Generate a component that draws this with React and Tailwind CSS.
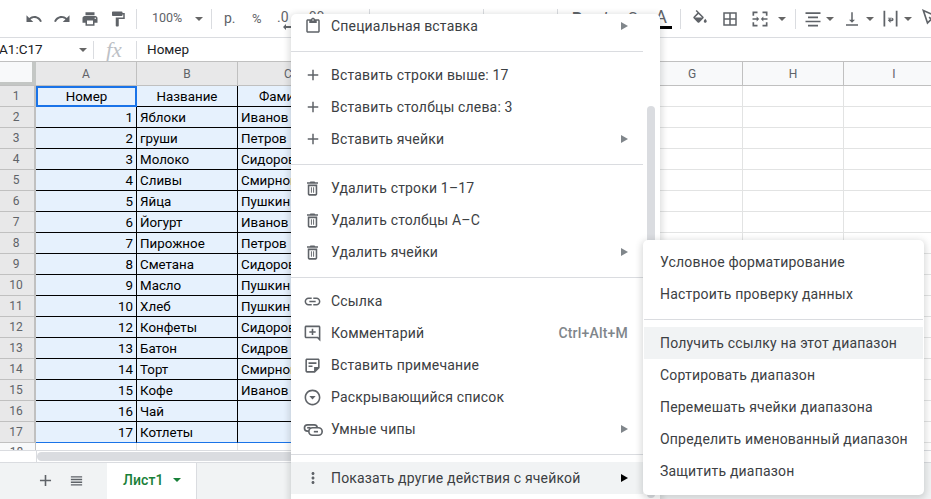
const ROWS = [
  ['Номер', 'Название', 'Фамилия'],
  ['1', 'Яблоки', 'Иванов'],
  ['2', 'груши', 'Петров'],
  ['3', 'Молоко', 'Сидоров'],
  ['4', 'Сливы', 'Смирнов'],
  ['5', 'Яйца', 'Пушкин'],
  ['6', 'Йогурт', 'Иванов'],
  ['7', 'Пирожное', 'Петров'],
  ['8', 'Сметана', 'Сидоров'],
  ['9', 'Масло', 'Пушкин'],
  ['10', 'Хлеб', 'Пушкин'],
  ['12', 'Конфеты', 'Сидоров'],
  ['13', 'Батон', 'Сидров'],
  ['14', 'Торт', 'Смирнов'],
  ['15', 'Кофе', 'Иванов'],
  ['16', 'Чай', ''],
  ['17', 'Котлеты', ''],
]
const COLS = ['A', 'B', 'C', 'D', 'E', 'F', 'G', 'H', 'I']
const PLAIN = ['D', 'E', 'F', 'G', 'H', 'I']

function Icon({ d, size = 18, view = 24, className = 'text-[#5f6368]' }) {
  return (
    <svg width={size} height={size} viewBox={`0 0 ${view} ${view}`} fill="currentColor" className={`shrink-0 ${className}`}>
      <path d={d} />
    </svg>
  )
}

function Caret({ className = '' }) {
  return <span className={`shrink-0 w-0 h-0 border-x-[4px] border-x-transparent border-t-[4px] border-t-[#666] ${className}`} />
}

function Sep({ className = '' }) {
  return <span className={`shrink-0 w-px h-5 bg-[#dadce0] ${className}`} />
}

const P = {
  undo: 'M12.5 8c-2.65 0-5.05.99-6.9 2.6L2 7v9h9l-3.62-3.62c1.39-1.16 3.16-1.88 5.12-1.88 3.54 0 6.55 2.31 7.6 5.5l2.37-.78C21.08 11.03 17.15 8 12.5 8z',
  redo: 'M18.4 10.6C16.55 8.99 14.15 8 11.5 8c-4.65 0-8.58 3.03-9.96 7.22L3.9 16c1.05-3.19 4.05-5.5 7.6-5.5 1.95 0 3.73.72 5.12 1.88L13 16h9V7l-3.6 3.6z',
  print: 'M19 8H5c-1.66 0-3 1.34-3 3v6h4v4h12v-4h4v-6c0-1.66-1.34-3-3-3zm-3 11H8v-5h8v5zm3-7c-.55 0-1-.45-1-1s.45-1 1-1 1 .45 1 1-.45 1-1 1zm-1-9H6v4h12V3z',
  paint: 'M18 4V3c0-.55-.45-1-1-1H5c-.55 0-1 .45-1 1v4c0 .55.45 1 1 1h12c.55 0 1-.45 1-1V6h1v4H9v11c0 .55.45 1 1 1h2c.55 0 1-.45 1-1v-9h8V4h-3z',
  fill: 'M16.56 8.94L7.62 0 6.21 1.41l2.38 2.38-5.15 5.15c-.59.59-.59 1.54 0 2.12l5.5 5.5c.29.29.68.44 1.06.44s.77-.15 1.06-.44l5.5-5.5c.59-.58.59-1.53 0-2.12zM5.21 10L10 5.21 14.79 10H5.21zM19 11.5s-2 2.17-2 3.5c0 1.1.9 2 2 2s2-.9 2-2c0-1.33-2-3.5-2-3.5z',
  borders: 'M3 3v18h18V3H3zm8 16H5v-6h6v6zm0-8H5V5h6v6zm8 8h-6v-6h6v6zm0-8h-6V5h6v6z',
  merge: 'M3 3h6v2H5v3H3V3zm12 0h6v5h-2V5h-4V3zM3 16h2v3h4v2H3v-5zm16 0h2v5h-6v-2h4v-3zM3 11h5V9l3 3-3 3v-2H3v-2zm18 0h-5V9l-3 3 3 3v-2h5v-2z',
  align: 'M3 4h18v2H3V4zm3 5h12v2H6V9zm-3 5h18v2H3v-2zm3 5h12v2H6v-2z',
  valign: 'M11 3h2v10h3l-4 4-4-4h3V3zM4 19h16v2H4v-2z',
  wrap: 'M4 3h2v18H4V3zm14 0h2v18h-2V3zM9 11h4.5a2 2 0 0 1 0 4H12v2l-3-3 3-3v2h1.5a.5.5 0 0 0 0-1H9v-1z',
  paste: 'M19 3h-4.18C14.4 1.84 13.3 1 12 1s-2.4.84-2.82 2H5c-1.1 0-2 .9-2 2v14c0 1.1.9 2 2 2h14c1.1 0 2-.9 2-2V5c0-1.1-.9-2-2-2zm-7 0c.55 0 1 .45 1 1s-.45 1-1 1-1-.45-1-1 .45-1 1-1zm7 16H5V5h2v3h10V5h2v14z',
  plus: 'M19 13h-6v6h-2v-6H5v-2h6V5h2v6h6v2z',
  trash: 'M6 19c0 1.1.9 2 2 2h8c1.1 0 2-.9 2-2V7H6v12zM8 9h8v10H8V9zm7.5-5l-1-1h-5l-1 1H5v2h14V4zM10 10.5h1.2v7H10v-7zm2.8 0H14v7h-1.2v-7z',
  link: 'M3.9 12c0-1.71 1.39-3.1 3.1-3.1h4V7H7c-2.76 0-5 2.24-5 5s2.24 5 5 5h4v-1.9H7c-1.71 0-3.1-1.39-3.1-3.1zM8 13h8v-2H8v2zm9-6h-4v1.9h4c1.71 0 3.1 1.39 3.1 3.1s-1.39 3.1-3.1 3.1h-4V17h4c2.76 0 5-2.24 5-5s-2.24-5-5-5z',
  comment: 'M22 4c0-1.1-.9-2-2-2H4c-1.1 0-2 .9-2 2v12c0 1.1.9 2 2 2h14l4 4V4zm-2 0v13.2L18.8 16H4V4h16zM11 6h2v3h3v2h-3v3h-2v-3H8V9h3V6z',
  note: 'M19 3H5c-1.1 0-2 .9-2 2v14c0 1.1.9 2 2 2h10l6-6V5c0-1.1-.9-2-2-2zM5 19V5h14v9h-5v5H5zm2-11h10v2H7V8zm0 4h5v2H7v-2z',
  dropdown: 'M12 2C6.48 2 2 6.48 2 12s4.48 10 10 10 10-4.48 10-10S17.52 2 12 2zm0 18c-4.42 0-8-3.58-8-8s3.58-8 8-8 8 3.58 8 8-3.58 8-8 8zm-4-10h8l-4 4.5L8 10z',
  more: 'M12 8c1.100 0 2-.9 2-2s-.9-2-2-2-2 .9-2 2 .9 2 2 2zm0 2c-1.100 0-2 .9-2 2s.9 2 2 2 2-.9 2-2-.9-2-2-2zm0 6c-1.100 0-2 .9-2 2s.9 2 2 2 2-.9 2-2-.9-2-2-2z',
  list: 'M3 5h18v2.200H3V5zm0 4.300h18v2.200H3V9.300zm0 4.300h18v2.200H3v-2.200zM3 18h18v2H3v-2z',
}

function ChipsIcon() {
  return (
    <svg width="20" height="20" viewBox="0 0 24 24" fill="none" stroke="currentColor" strokeWidth="2" className="shrink-0 text-[#5f6368]">
      <path d="M7 14.500H5.500a3.700 3.700 0 0 1 0-7.500h8a3.700 3.700 0 0 1 3.600 3" />
      <path d="M5 10.500h4" />
      <rect x="7" y="10.500" width="16" height="9" rx="4.500" />
      <path d="M13 15.200h5" />
    </svg>
  )
}

function RotateIcon() {
  return (
    <svg width="20" height="20" viewBox="0 0 24 24" fill="none" stroke="currentColor" strokeWidth="2" className="shrink-0 ml-[2px] text-[#5f6368]">
      <path d="M4 3l5 15 9-9zM11 11l10 10" />
    </svg>
  )
}

function MenuItem({ icon, iconNode, size = 18, label, hint, arrow, active, dark }) {
  return (
    <div className={`h-8 w-[352px] flex items-center shrink-0 ${active ? 'bg-[#f1f3f4]' : ''}`}>
      <span className="w-10 flex justify-center shrink-0 pl-[3px]">
        {iconNode}
        {icon && <Icon d={icon} size={size} />}
      </span>
      <span className="text-[#3c4043] text-[14px] tracking-[0.17px] grow whitespace-nowrap">{label}</span>
      {hint && <span className="text-[#80868b] text-[14px] tracking-[0.2px] font-medium mr-[15px]">{hint}</span>}
      {arrow && (
        <span className={`mr-[15px] w-0 h-0 border-y-[4px] border-y-transparent border-l-[7px] ${dark ? 'border-l-black' : 'border-l-[#80868b]'}`} />
      )}
    </div>
  )
}

function Divider() {
  return <div className="h-px w-[352px] bg-[#dadce0] mt-[9px] mb-[7px] shrink-0" />
}

function SubItem({ label, active }) {
  return (
    <div className={`h-8 pl-4 flex items-center text-[14px] tracking-[0.19px] text-[#3c4043] whitespace-nowrap ${active ? 'bg-[#f1f3f4]' : ''}`}>
      {label}
    </div>
  )
}

export default function App() {
  return (
    <div className="relative w-[931px] h-[499px] overflow-hidden bg-white font-['Roboto',sans-serif] flex flex-col">
      {/* Toolbar */}
      <div className="h-[38px] shrink-0 flex items-center border-b border-[#dadce0] text-[#5f6368] overflow-hidden">
        <span className="w-[25px] shrink-0" />
        <Icon d={P.undo} />
        <Icon d={P.redo} className="text-[#5f6368] ml-[10px]" />
        <Icon d={P.print} className="text-[#5f6368] ml-[10px]" />
        <Icon d={P.paint} className="text-[#5f6368] ml-[10px]" />
        <Sep className="ml-[9px]" />
        <span className="ml-[15px] text-[12.5px] w-[30px] shrink-0">100%</span>
        <Caret className="ml-[13px]" />
        <Sep className="ml-[8px]" />
        <span className="ml-[12px] text-[14px] w-[12px] shrink-0">р.</span>
        <span className="ml-[16px] text-[13px] w-[12px] shrink-0">%</span>
        <span className="ml-[13px] w-[14px] shrink-0 flex flex-col pt-[3px]">
          <span className="text-[14px] leading-[14px]">.0</span>
          <svg width="9" height="6" viewBox="0 0 9 6" fill="currentColor" className="ml-[6px]"><path d="M0 3l3-3v2h6v2H3v2z" /></svg>
        </span>
        <span className="ml-[14px] w-[18px] shrink-0 flex flex-col pt-[3px]">
          <span className="text-[14px] leading-[14px]">.00</span>
          <svg width="9" height="6" viewBox="0 0 9 6" fill="currentColor" className="ml-[6px]"><path d="M9 3L6 0v2H0v2h6v2z" /></svg>
        </span>
        <span className="ml-[8px] text-[13px] w-[24px] shrink-0">123</span>
        <Sep className="ml-[14px]" />
        <span className="ml-[17px] w-[96px] shrink-0 text-[13px] whitespace-nowrap">По умолчанию</span>
        <Sep />
        <span className="ml-[16px] text-[13px] w-[14px] shrink-0">10</span>
        <Sep className="ml-[43px]" />
        <span className="ml-[14px] text-[16px] font-bold w-[14px] shrink-0">B</span>
        <span className="ml-[17px] text-[16px] italic w-[14px] shrink-0">I</span>
        <span className="ml-[11px] text-[16px] w-[14px] shrink-0">S</span>
        <span className="ml-[12px] w-[18px] flex flex-col items-center shrink-0">
          <span className="text-[18px] leading-[16px] pr-[4px]">A</span>
          <span className="w-[18px] h-[3px] bg-black mt-[1px]" />
        </span>
        <Sep className="ml-[8px]" />
        <Icon d={P.fill} className="text-[#5f6368] ml-[10px]" />
        <Icon d={P.borders} className="text-[#5f6368] ml-[12px]" />
        <Icon d={P.merge} size={20} className="text-[#5f6368] ml-[11px]" />
        <Caret className="ml-[8px]" />
        <Sep className="ml-[9px]" />
        <Icon d={P.align} size={20} className="text-[#5f6368] ml-[7px]" />
        <Caret className="ml-[3px]" />
        <Icon d={P.valign} className="text-[#5f6368] ml-[9px]" />
        <Caret className="ml-[5px]" />
        <Icon d={P.wrap} size={21} className="text-[#5f6368] ml-[6px]" />
        <Caret className="ml-[3px]" />
        <span className="ml-[6px] shrink-0 -mt-[1px]"><RotateIcon /></span>
      </div>

      {/* Formula bar */}
      <div className="h-[24px] shrink-0 flex items-center border-b border-[#c0c0c0] text-[13.5px] text-[#202124]">
        <span className="-ml-[1px] w-[80px] shrink-0">A1:C17</span>
        <Caret />
        <span className="ml-[6px] w-px h-[18px] bg-[#dadce0] shrink-0" />
        <span className="ml-[12px] w-[30px] font-['Liberation_Serif',serif] italic text-[22px] leading-[22px] text-[#bdc1c6] shrink-0">fx</span>
        <span className="w-px h-[18px] bg-[#dadce0] shrink-0" />
        <span className="ml-[10px]">Номер</span>
      </div>

      {/* Column headers */}
      <div className="h-[24px] shrink-0 flex border-b border-[#c0c0c0] text-[12px] text-[#5f6368]">
        <div className="w-[36px] shrink-0 bg-[#f8f9fa] border-r-[4px] border-b-[3px] border-[#c4c7c5]" />
        {COLS.map(c => (
          <div
            key={c}
            className={`w-[101px] shrink-0 flex items-center justify-center border-r border-[#c0c0c0] ${PLAIN.includes(c) ? 'bg-[#f8f9fa]' : 'bg-[#e8e8e9]'}`}
          >
            {c}
          </div>
        ))}
      </div>

      {/* Cells */}
      <div className="flex flex-col shrink-0">
        {ROWS.map((row, i) => (
          <div key={i} className="h-[21px] flex text-[13.33px] text-black">
            <div className="w-[36px] shrink-0 flex items-center justify-center bg-[#e8e8e9] border-r-2 border-b border-[#c0c0c0] text-[12px] text-[#5f6368] pr-[2px]">
              {i + 1}
            </div>
            <div className={`w-[101px] shrink-0 flex items-center pt-px bg-[#e6f1fd] ${i === 0 ? 'justify-center border-2 border-[#1a73e8]' : 'justify-end pr-[3px] border-r border-b border-black'} ${i === 16 ? 'border-b-[#1a73e8]' : ''}`}>
              {row[0]}
            </div>
            <div className={`w-[101px] shrink-0 flex items-center pt-px bg-[#e6f1fd] border-r border-b border-black ${i === 0 ? 'justify-center' : 'pl-[3px]'} ${i === 16 ? 'border-b-[#1a73e8]' : ''}`}>
              {row[1]}
            </div>
            <div className={`w-[101px] shrink-0 flex items-center pt-px bg-[#e6f1fd] border-r border-b border-black whitespace-nowrap overflow-hidden ${i === 0 ? 'justify-center' : 'pl-[3px]'} ${i === 16 ? 'border-b-[#1a73e8]' : ''}`}>
              {row[2]}
            </div>
            {PLAIN.map(c => (
              <div key={c} className="w-[101px] shrink-0 border-r border-b border-[#e2e3e3]" />
            ))}
          </div>
        ))}
        {/* row 18 is cut off by the scrollbar */}
        <div className="h-[7px] flex overflow-hidden text-[12px] text-[#5f6368]">
          <div className="w-[36px] shrink-0 bg-[#f8f9fa] border-r border-[#c0c0c0] flex justify-center pr-[2px]">18</div>
          {COLS.map(c => (
            <div key={c} className="w-[101px] shrink-0 border-r border-[#e2e3e3]" />
          ))}
        </div>
      </div>

      {/* Scrollbar */}
      <div className="h-[12px] shrink-0 flex items-center border-t border-[#dadce0] bg-white">
        <div className="w-[37px] shrink-0 h-full border-r border-[#dadce0]" />
        <div className="w-[700px] h-[9px] rounded-full bg-[#dadce0]" />
      </div>

      {/* Sheet tabs */}
      <div className="grow flex items-stretch bg-[#f1f3f4] border-t border-[#dadce0]">
        <Icon d={P.plus} size={19} className="text-[#5f6368] ml-[36px] mt-[8px]" />
        <Icon d={P.list} size={15} className="text-[#5f6368] ml-[14px] mt-[10px]" />
        <div className="ml-[23px] w-[90px] bg-white flex items-center pb-[2px] border-r border-[#dadce0] text-[#188038] text-[14px] font-medium">
          <span className="ml-[16px] tracking-[0.1px]">Лист1</span>
          <Caret className="ml-[9px] border-t-[#188038]" />
        </div>
      </div>

      {/* Context menu */}
      <div className="absolute left-[291px] top-[14px] w-[369px] h-[490px] bg-white rounded-[5px] shadow-[0_2px_6px_2px_rgba(60,64,67,0.18)] overflow-hidden flex flex-col">
        <div className="-mt-[4px] flex flex-col">
          <MenuItem icon={P.paste} label="Специальная вставка" arrow />
          <Divider />
          <MenuItem icon={P.plus} label="Вставить строки выше: 17" />
          <MenuItem icon={P.plus} label="Вставить столбцы слева: 3" />
          <MenuItem icon={P.plus} label="Вставить ячейки" arrow />
          <Divider />
          <MenuItem icon={P.trash} size={19} label="Удалить строки 1–17" />
          <MenuItem icon={P.trash} size={19} label="Удалить столбцы A–C" />
          <MenuItem icon={P.trash} size={19} label="Удалить ячейки" arrow />
          <Divider />
          <MenuItem icon={P.link} size={19} label="Ссылка" />
          <MenuItem icon={P.comment} size={19} label="Комментарий" hint="Ctrl+Alt+M" />
          <MenuItem icon={P.note} size={19} label="Вставить примечание" />
          <MenuItem icon={P.dropdown} size={19} label="Раскрывающийся список" />
          <MenuItem iconNode={<ChipsIcon />} label="Умные чипы" arrow />
          <Divider />
          <MenuItem icon={P.more} label="Показать другие действия с ячейкой" arrow active dark />
        </div>
        <div className="absolute left-[356px] top-[92px] w-2 h-[392px] rounded-full bg-[#dadce0]" />
      </div>

      {/* Submenu */}
      <div className="absolute left-[643px] top-[240px] w-[281px] bg-white rounded-[5px] shadow-[0_2px_6px_2px_rgba(60,64,67,0.18)] pt-[6px] pb-2 px-px">
        <SubItem label="Условное форматирование" />
        <SubItem label="Настроить проверку данных" />
        <div className="h-px bg-[#dadce0] mt-[9px] mb-[7px]" />
        <SubItem label="Получить ссылку на этот диапазон" active />
        <SubItem label="Сортировать диапазон" />
        <SubItem label="Перемешать ячейки диапазона" />
        <SubItem label="Определить именованный диапазон" />
        <SubItem label="Защитить диапазон" />
      </div>
    </div>
  )
}
